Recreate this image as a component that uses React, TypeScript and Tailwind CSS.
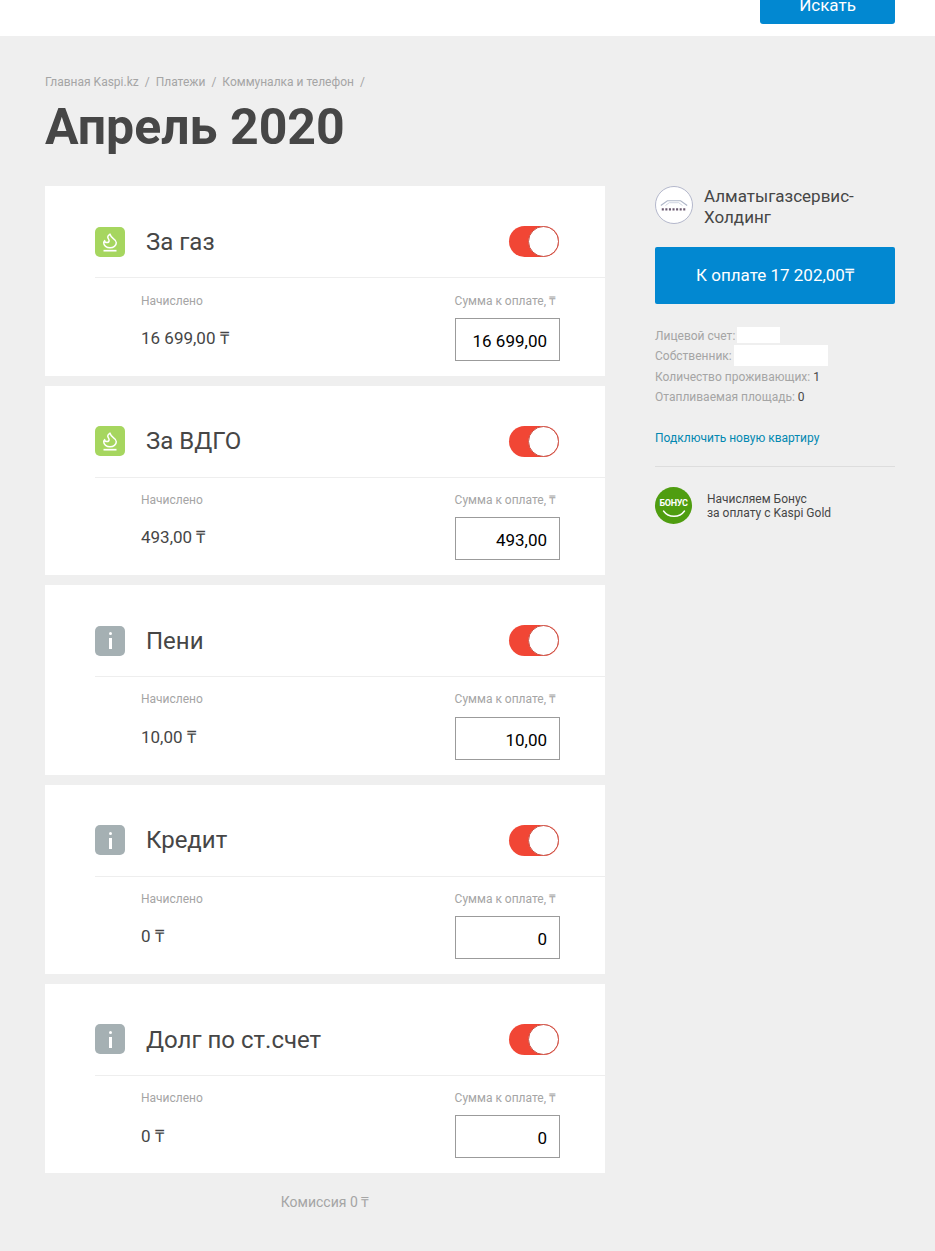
const roboto = "font-['Roboto',sans-serif]"

const GasIcon = () => (
  <div className="flex h-[30px] w-[30px] items-center justify-center rounded-[5px] bg-[#a6d65f]">
    <svg viewBox="0 0 30 30" className="h-[30px] w-[30px]" fill="none" stroke="#fff" strokeWidth="1.5" strokeLinecap="round" strokeLinejoin="round">
      <g transform="translate(4.2 5) scale(0.9 0.72)">
        <path
          vectorEffect="non-scaling-stroke"
          d="M12 3q1 4 4 6.5t3 5.5a1 1 0 0 1-14 0 5 5 0 0 1 1-3 1 1 0 0 0 5 0c0-2-1.5-3-1.5-5q0-2 2.5-4"
        />
      </g>
      <path d="M8.5 23.7h13" strokeWidth="1.7" strokeLinecap="butt" />
    </svg>
  </div>
)

const InfoIcon = () => (
  <div className="flex h-[30px] w-[30px] flex-col items-center justify-center gap-[3px] rounded-[5px] bg-[#a5b0b3]">
    <div className="h-[3px] w-[3px] rounded-full bg-white" />
    <div className="h-[11px] w-[3px] bg-white" />
  </div>
)

const Toggle = () => (
  <div className="flex h-[31px] w-[50px] justify-end rounded-full bg-[#f14635]">
    <div className="h-[31px] w-[31px] rounded-full border border-[#c9574c] bg-white" />
  </div>
)

const bills = [
  { title: "За газ", icon: "gas", accrued: "16 699,00", pay: "16 699,00" },
  { title: "За ВДГО", icon: "gas", accrued: "493,00", pay: "493,00" },
  { title: "Пени", icon: "info", accrued: "10,00", pay: "10,00" },
  { title: "Кредит", icon: "info", accrued: "0", pay: "0" },
  { title: "Долг по ст.счет", icon: "info", accrued: "0", pay: "0" }
]

const BillCard = ({ bill }: { bill: (typeof bills)[number] }) => (
  <div className="h-[189.4px] bg-white pl-[50px]">
    <div className="flex h-[92px] items-center border-b border-[#eeeeee] pt-[20px] pr-[46px]">
      {bill.icon === "gas" ? <GasIcon /> : <InfoIcon />}
      <div className="ml-[21px] flex-1 pt-[0.3px] text-[24px] text-[#464646]">{bill.title}</div>
      <Toggle />
    </div>
    <div className="flex justify-between pt-[15.25px] pr-[45px] pl-[46px]">
      <div>
        <div className="text-[12px] leading-[14px] text-[#a5a5a5]">Начислено</div>
        <div className="mt-[20.4px] text-[17px] leading-[20px] text-[#464646]">{bill.accrued} ₸</div>
      </div>
      <div className="flex w-[105px] flex-col items-end">
        <div className="mr-[4px] text-[12px] leading-[14px] whitespace-nowrap text-[#a5a5a5]">Сумма к оплате, ₸</div>
        <div className="mt-[10.2px] h-[43px] w-[105px] border border-[#9b9b9b] pt-[12px] pr-[12px] text-right text-[17px] leading-[20px] text-black">
          {bill.pay}
        </div>
      </div>
    </div>
  </div>
)

export default function App() {
  return (
    <div className={`h-[1251px] overflow-hidden bg-[#efefef] ${roboto}`}>
      <header className="flex h-[36px] items-start justify-end bg-white pr-[40px]">
        <div className="flex h-[24px] w-[135px] items-end justify-center overflow-hidden rounded-b-[3px] bg-[#0288d1] text-[17px] leading-[20px] text-white">
          <span className="mb-[9px]">Искать</span>
        </div>
      </header>

      <main className="pt-[38px] pr-[40px] pl-[45px]">
        <nav className="flex gap-[6px] text-[12px] leading-[16px] text-[#a5a5a5]">
          <span>Главная Kaspi.kz</span>
          <span>/</span>
          <span>Платежи</span>
          <span>/</span>
          <span>Коммуналка и телефон</span>
          <span>/</span>
        </nav>
        <h1 className="mt-[7px] text-[50px] leading-[60px] font-bold text-[#464646]">Апрель 2020</h1>

        <div className="mt-[29.35px] flex">
          <div className="w-[560px]">
            <div className="flex flex-col gap-[10px]">
              {bills.map((bill) => (
                <BillCard key={bill.title} bill={bill} />
              ))}
            </div>
            <div className="mt-[20px] text-center text-[14px] leading-[18px] text-[#a5a5a5]">Комиссия 0 ₸</div>
          </div>

          <aside className="ml-[50px] w-[240px]">
            <div className="flex h-[61px] items-start">
              <div className="flex h-[38px] w-[38px] items-center justify-center rounded-full border border-[#b4b8cc] bg-white">
                <svg viewBox="0 0 34 18" className="h-[17px] w-[32px]" fill="none">
                  <path d="M3 9 10 4h14l7 5" stroke="#aeb6c8" strokeWidth="1.2" />
                  <path d="M8 9l4-3h10l4 3" stroke="#cdd3df" strokeWidth="1" />
                  <path d="M4 13h26" stroke="#6b5a70" strokeWidth="2.4" strokeDasharray="2.2 1.6" />
                </svg>
              </div>
              <div className="ml-[11px] text-[17px] leading-[21px] text-[#464646]">
                Алматыгазсервис-
                <br />
                Холдинг
              </div>
            </div>
            <div className="flex h-[57px] items-center justify-center rounded-[2px] bg-[#0288d1] text-[17px] text-white">
              К оплате 17 202,00₸
            </div>
            <div className="mt-[21.35px] text-[12px] leading-[20.4px] text-[#a5a5a5]">
              <div className="flex">
                Лицевой счет:
                <div className="mt-[1px] ml-[2px] h-[16px] w-[43px] bg-white" />
              </div>
              <div className="flex">
                Собственник:
                <div className="-mt-[1px] ml-[2px] h-[21px] w-[94px] bg-white" />
              </div>
              <div>
                Количество проживающих: <span className="text-[#464646]">1</span>
              </div>
              <div>
                Отапливаемая площадь: <span className="text-[#464646]">0</span>
              </div>
            </div>
            <div className="mt-[23px] border-b border-[#dddddd] pb-[20px] text-[12px] leading-[16px] text-[#0288b1]">
              Подключить новую квартиру
            </div>
            <div className="mt-[20px] flex items-center">
              <div className="relative flex h-[37px] w-[37px] items-center justify-center rounded-full bg-[#4f9d10]">
                <span className="-mt-[6px] text-[9px] leading-[10px] font-bold tracking-[-0.3px] text-white">БОНУС</span>
                <svg viewBox="0 0 24 8" className="absolute top-[23px] left-[7px] h-[8px] w-[24px]" fill="none">
                  <path d="M1.5 1c5 7 16 7 21 0" stroke="#fff" strokeWidth="1.4" strokeLinecap="round" />
                </svg>
              </div>
              <div className="ml-[15px] text-[12px] leading-[14px] text-[#464646]">
                Начисляем Бонус
                <br />
                за оплату с Kaspi Gold
              </div>
            </div>
          </aside>
        </div>
      </main>
    </div>
  )
}
